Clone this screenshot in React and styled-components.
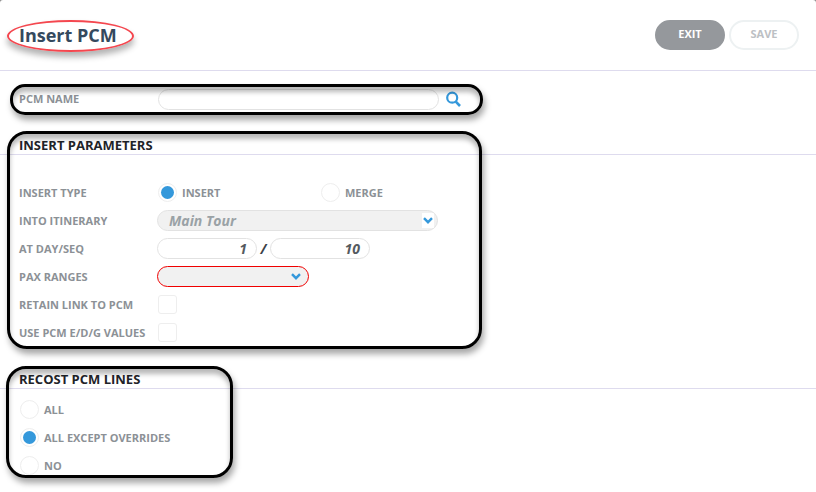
import React from "react";
import styled, { createGlobalStyle } from "styled-components";

const Global = createGlobalStyle`
  html, body { margin: 0; padding: 0; background: #8a8a8a; }
  body { font-family: "Open Sans", "Noto Sans", sans-serif; overflow: hidden; }
`;

const Page = styled.div`
  position: relative;
  width: 816px;
  height: 492px;
  overflow: hidden;
  background: #fff;
  border-radius: 3px 3px 0 0;
`;

const Header = styled.header`
  height: 70px;
  box-sizing: content-box;
  border-bottom: 1px solid #dedbee;
  display: flex;
  align-items: center;
  justify-content: space-between;
  padding: 0 17px 0 19px;
`;

const Title = styled.h1`
  margin: 0;
  font-size: 18px;
  font-weight: 700;
  color: #34495e;
`;

const Buttons = styled.div`
  display: flex;
  gap: 4px;
`;

const Pill = styled.button`
  width: 70px;
  height: 30px;
  padding: 0 0 4px;
  border-radius: 15px;
  font: 700 11px "Open Sans", sans-serif;
  border: 2px solid ${(p) => (p.$primary ? "#95989c" : "#edf1f2")};
  background: ${(p) => (p.$primary ? "#95989c" : "#fff")};
  color: ${(p) => (p.$primary ? "#fff" : "#bcc0c4")};
`;

const NameRow = styled.div`
  height: 20px;
  margin-top: 18px;
  padding-left: 19px;
  display: flex;
  align-items: center;
`;

const Label = styled.label`
  width: 138px;
  flex: none;
  font-size: 11px;
  line-height: 14px;
  font-weight: 700;
  color: #8c9196;
  white-space: nowrap;
`;

const TextInput = styled.div`
  box-sizing: border-box;
  width: ${(p) => p.$w}px;
  height: 21px;
  margin-left: ${(p) => p.$ml || 0}px;
  border: 1px solid #e2e2e2;
  border-radius: 11px;
  background: #fff;
  padding-right: 9px;
  text-align: right;
  font-size: 14px;
  line-height: 19px;
  font-style: italic;
  font-weight: 700;
  color: #555a60;
`;

const SearchButton = styled.span`
  display: flex;
  margin-left: 7px;
  color: #3498db;
`;

const SectionHead = styled.h2`
  margin: ${(p) => p.$top}px 0 0;
  height: 20px;
  padding-left: 19px;
  border-bottom: 1px solid #dedbee;
  font-size: 13px;
  line-height: 22px;
  font-weight: 700;
  color: #1f2429;
`;

const Rows = styled.div`
  margin-top: ${(p) => p.$top}px;
  padding-left: ${(p) => p.$left}px;
  display: flex;
  flex-direction: column;
  gap: 7px;
`;

const Row = styled.div`
  height: 21px;
  display: flex;
  align-items: center;
`;

const Option = styled.div`
  display: flex;
  align-items: center;
  gap: 5px;
  width: ${(p) => p.$w || "auto"};
  flex: none;
  margin-left: ${(p) => p.$ml || 0}px;
`;

const RadioCircle = styled.span`
  box-sizing: border-box;
  width: 19px;
  height: 19px;
  border: 1px solid #eeeeee;
  border-radius: 50%;
  background: #fff;
  display: flex;
  align-items: center;
  justify-content: center;
  &::after {
    content: "";
    display: ${(p) => (p.$on ? "block" : "none")};
    width: 13px;
    height: 13px;
    border-radius: 50%;
    background: #3498db;
  }
`;

const OptionText = styled.span`
  font-size: 11px;
  font-weight: 700;
  color: #8c9196;
  white-space: nowrap;
`;

const Select = styled.div`
  box-sizing: border-box;
  width: ${(p) => p.$w}px;
  height: 21px;
  border: 1px solid ${(p) => (p.$error ? "#f00000" : "#e2e2e2")};
  border-radius: 11px;
  background: #f1f1f1;
  display: flex;
  align-items: center;
  justify-content: space-between;
  padding-left: 11px;
  padding-right: 3px;
  overflow: hidden;
  font-size: 14px;
  font-style: italic;
  font-weight: 700;
  color: #9aa2a6;
`;

const Caret = styled.span`
  width: 12px;
  height: 15px;
  display: flex;
  align-items: center;
  justify-content: center;
  background: ${(p) => (p.$plain ? "transparent" : "#fff")};
  color: #3498db;
  margin-right: ${(p) => (p.$plain ? 3 : 0)}px;
`;

const Slash = styled.span`
  width: 13px;
  text-align: center;
  font-size: 14px;
  font-style: italic;
  font-weight: 700;
  color: #3c4248;
`;

const Checkbox = styled.span`
  box-sizing: border-box;
  width: 19px;
  height: 19px;
  margin-left: 1px;
  border: 1px solid #eeeeee;
  border-radius: 3px;
  background: #fff;
`;

const Annotation = styled.div`
  position: absolute;
  box-sizing: border-box;
  left: ${(p) => p.$x}px;
  top: ${(p) => p.$y}px;
  width: ${(p) => p.$w}px;
  height: ${(p) => p.$h}px;
  border: 3px solid #000;
  border-radius: ${(p) => p.$r}px;
  box-shadow: 2px 5px 6px rgba(0, 0, 0, 0.35), inset 0 5px 5px rgba(0, 0, 0, 0.28);
  pointer-events: none;
`;

const TitleRing = styled.div`
  position: absolute;
  box-sizing: border-box;
  left: 7px;
  top: 20px;
  width: 127px;
  height: 32px;
  border: 2px solid #f4474f;
  border-radius: 50%;
  box-shadow: 0 5px 6px rgba(0, 0, 0, 0.3);
  pointer-events: none;
`;

const Chevron = () => (
  <svg width="10" height="7" viewBox="0 0 10 7" fill="none" stroke="currentColor" strokeWidth="2.4">
    <path d="M1 1.2 5 5.2 9 1.2" />
  </svg>
);

const Magnifier = () => (
  <svg width="15" height="16" viewBox="0 0 15 16" fill="none" stroke="currentColor">
    <circle cx="6.2" cy="6.7" r="5" strokeWidth="2.2" />
    <path d="M9.8 10.6 14 15" strokeWidth="2.6" />
  </svg>
);

export default function App() {
  return (
    <Page>
      <Global />
      <Header>
        <Title>Insert PCM</Title>
        <Buttons>
          <Pill $primary>EXIT</Pill>
          <Pill>SAVE</Pill>
        </Buttons>
      </Header>

      <NameRow>
        <Label>PCM NAME</Label>
        <TextInput $w={281} $ml={1} />
        <SearchButton>
          <Magnifier />
        </SearchButton>
      </NameRow>

      <SectionHead $top={25}>INSERT PARAMETERS</SectionHead>
      <Rows $top={27} $left={19}>
        <Row>
          <Label>INSERT TYPE</Label>
          <Option $w="163px" $ml={1}>
            <RadioCircle $on />
            <OptionText>INSERT</OptionText>
          </Option>
          <Option>
            <RadioCircle />
            <OptionText>MERGE</OptionText>
          </Option>
        </Row>
        <Row>
          <Label>INTO ITINERARY</Label>
          <Select $w={281}>
            Main Tour
            <Caret>
              <Chevron />
            </Caret>
          </Select>
        </Row>
        <Row>
          <Label>AT DAY/SEQ</Label>
          <TextInput $w={100}>1</TextInput>
          <Slash>/</Slash>
          <TextInput $w={100}>10</TextInput>
        </Row>
        <Row>
          <Label>PAX RANGES</Label>
          <Select $w={152} $error>
            <span />
            <Caret $plain>
              <Chevron />
            </Caret>
          </Select>
        </Row>
        <Row>
          <Label>RETAIN LINK TO PCM</Label>
          <Checkbox />
        </Row>
        <Row>
          <Label>USE PCM E/D/G VALUES</Label>
          <Checkbox />
        </Row>
      </Rows>

      <SectionHead $top={25}>RECOST PCM LINES</SectionHead>
      <Rows $top={10} $left={20}>
        <Row>
          <Option>
            <RadioCircle />
            <OptionText>ALL</OptionText>
          </Option>
        </Row>
        <Row>
          <Option>
            <RadioCircle $on />
            <OptionText>ALL EXCEPT OVERRIDES</OptionText>
          </Option>
        </Row>
        <Row>
          <Option>
            <RadioCircle />
            <OptionText>NO</OptionText>
          </Option>
        </Row>
      </Rows>

      <TitleRing />
      <Annotation $x={10} $y={84} $w={473} $h={31} $r={15} />
      <Annotation $x={7} $y={131} $w={475} $h={218} $r={20} />
      <Annotation $x={6} $y={366} $w={227} $h={112} $r={20} />
    </Page>
  );
}
